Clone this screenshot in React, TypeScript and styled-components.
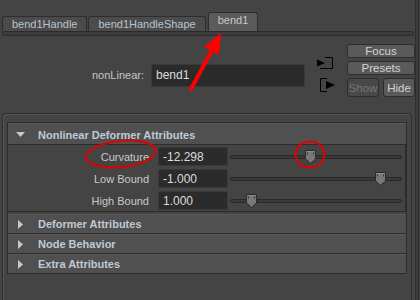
import React from 'react';
import styled, { createGlobalStyle } from 'styled-components';

const Global = createGlobalStyle`
  html, body { margin: 0; padding: 0; background: #444444; }
  body { font-family: "Liberation Sans", Arial, sans-serif; font-size: 11px; color: #c8c8c8; }
`;

const Root = styled.div`
  position: relative;
  width: 420px;
  height: 300px;
  overflow: hidden;
  background: #444444;
  display: flex;
`;

const Main = styled.div`
  width: 415px;
  display: flex;
  flex-direction: column;
`;

const Gutter = styled.div`
  flex: 1;
  border-left: 1px solid #2e2e2e;
  border-right: 1px solid #2e2e2e;
  background: #3d3d3d;
  margin-right: 1px;
`;

const TabBar = styled.div`
  height: 31px;
  display: flex;
  align-items: flex-end;
  padding-left: 2px;
  gap: 1px;
`;

const Tab = styled.div<{ $active?: boolean }>`
  height: ${(p) => (p.$active ? 19 : 15)}px;
  padding: 0 9px;
  margin-left: ${(p) => (p.$active ? 1 : 0)}px;
  display: flex;
  align-items: center;
  box-sizing: border-box;
  background: ${(p) => (p.$active ? '#5b5b5b' : '#4b4b4b')};
  border: 1px solid #2d2d2d;
  border-bottom: none;
  border-radius: 3px 3px 0 0;
  color: ${(p) => (p.$active ? '#c4c8cc' : '#b9c3cd')};
  font-size: 11px;
  line-height: 1;
  padding-bottom: ${(p) => (p.$active ? 3 : 0)}px;
`;

const TabBase = styled.div`
  height: 5px;
  box-sizing: border-box;
  margin: 0 1px 0 2px;
  background: #3c3c3c;
  border: 1px solid #2b2b2b;
  border-radius: 3px;
`;

const Top = styled.div`
  height: 77px;
  display: flex;
  align-items: center;
  justify-content: flex-end;
`;

const NameRow = styled.div`
  display: flex;
  align-items: center;
  margin-top: 1px;
`;

const NameLabel = styled.span`
  color: #c6c6c6;
  margin-right: 7px;
`;

const NameField = styled.div`
  width: 154px;
  height: 23px;
  box-sizing: border-box;
  background: #2b2b2b;
  border: 1px solid #393939;
  border-radius: 2px;
  padding-left: 4px;
  display: flex;
  align-items: center;
  color: #dcdcdc;
  font-size: 12px;
`;

const IconCol = styled.div`
  width: 18px;
  margin: 0 12px;
  display: flex;
  flex-direction: column;
  gap: 8px;
  margin-top: -1px;
`;

const ButtonCol = styled.div`
  align-self: flex-start;
  margin-top: 8px;
  width: 68px;
  display: flex;
  flex-direction: column;
  gap: 3px;
`;

const ButtonRow = styled.div`
  display: flex;
  gap: 4px;
`;

const Btn = styled.div<{ $disabled?: boolean; $w?: number }>`
  height: 19px;
  ${(p) => (p.$w ? `width: ${p.$w}px;` : 'flex: 1;')}
  box-sizing: border-box;
  border: 1px solid #2d2d2d;
  border-radius: 3px;
  background: ${(p) => (p.$disabled ? '#484848' : '#5a5a5a')};
  color: ${(p) => (p.$disabled ? '#777777' : '#d2d2d2')};
  display: flex;
  align-items: center;
  justify-content: center;
  font-size: 11.5px;
`;

const Frame = styled.div`
  flex: 1;
  margin: 0 3px 0 2px;
  border: 1px solid #2f2f2f;
  border-bottom: none;
  border-radius: 4px 4px 0 0;
  box-shadow: inset 1px 1px 0 #555555;
  padding: 8px 4px 0 4px;
  display: flex;
  flex-direction: column;
`;

const Section = styled.div`
  border: 1px solid #2c2c2c;
  border-bottom: none;
  display: flex;
  flex-direction: column;
`;

const Header = styled.div<{ $expanded?: boolean }>`
  height: ${(p) => (p.$expanded ? 22 : 20)}px;
  padding-top: ${(p) => (p.$expanded ? 2 : 0)}px;
  box-sizing: border-box;
  background: #505050;
  border-top: 1px solid #5a5a5a;
  border-bottom: 1px solid #2c2c2c;
  display: flex;
  align-items: center;
  padding-left: 8px;
  font-weight: bold;
  color: #bfcad6;
  font-size: 11px;
`;

const Arrow = styled.span`
  width: 22px;
  display: flex;
  align-items: center;
  justify-content: flex-start;
`;

const Content = styled.div`
  background: #444444;
  border-bottom: 1px solid #2c2c2c;
  border-right: 1px solid #2c2c2c;
  padding: 2px 0 1px 0;
  display: flex;
  flex-direction: column;
  gap: 3px;
  margin-bottom: 2px;
`;

const AttrRow = styled.div`
  height: 19px;
  display: flex;
  align-items: center;
`;

const AttrLabel = styled.span`
  width: 141px;
  text-align: right;
  color: #c8c8c8;
  margin-right: 9px;
`;

const AttrField = styled.div`
  width: 70px;
  height: 19px;
  box-sizing: border-box;
  background: #2b2b2b;
  border: 1px solid #393939;
  border-radius: 2px;
  padding-left: 4px;
  display: flex;
  align-items: center;
  color: #dcdcdc;
  font-size: 12px;
`;

const SliderWrap = styled.div`
  position: relative;
  width: 172px;
  margin-left: 2px;
  height: 19px;
  display: flex;
  align-items: center;
`;

const Track = styled.div`
  width: 100%;
  height: 4px;
  box-sizing: border-box;
  background: #3a3a3a;
  border: 1px solid #292929;
  border-radius: 2px;
`;

const Thumb = styled.svg`
  position: absolute;
  top: 2px;
  margin-left: -6px;
`;

const Overlay = styled.svg`
  position: absolute;
  left: 0;
  top: 0;
  pointer-events: none;
`;

const DownTri = () => (
  <svg width="9" height="6" viewBox="0 0 9 6">
    <polygon points="0,0 9,0 4.5,5" fill="#c8c8c8" />
  </svg>
);

const RightTri = () => (
  <svg width="6" height="9" viewBox="0 0 6 9" style={{ marginLeft: 2 }}>
    <polygon points="0,0 5,4.5 0,9" fill="#c8c8c8" />
  </svg>
);

const ConnIn = () => (
  <svg width="18" height="13" viewBox="0 0 18 13">
    <polygon points="0,2.5 8,6 0,9.5" fill="#000" />
    <polyline points="8,0.5 15.5,0.5 15.5,11.5 3,11.5" fill="none" stroke="#000" strokeWidth="1" />
  </svg>
);

const ConnOut = () => (
  <svg width="18" height="14" viewBox="0 0 18 14">
    <polyline points="10,0.5 3.5,0.5 3.5,13.5 10,13.5" fill="none" stroke="#000" strokeWidth="1" />
    <polygon points="9,3 18,7 9,11" fill="#000" />
  </svg>
);

const ThumbIcon = ({ pos }: { pos: number }) => (
  <Thumb width="13" height="16" viewBox="0 0 13 16" style={{ left: `${pos * 100}%` }}>
    <path d="M1.5 1.5 H11.5 V10 L6.5 14.5 L1.5 10 Z" fill="#787878" stroke="#2a2a2a" strokeWidth="1" />
    <path d="M2.5 2.5 H10.5" stroke="#8e8e8e" strokeWidth="1" />
    <rect x="3" y="3.5" width="1" height="2" fill="#333" />
    <rect x="9" y="3.5" width="1" height="2" fill="#333" />
  </Thumb>
);

const attrs = [
  { label: 'Curvature', value: '-12.298', pos: 0.465 },
  { label: 'Low Bound', value: '-1.000', pos: 0.87 },
  { label: 'High Bound', value: '1.000', pos: 0.12 },
];

const collapsed = ['Deformer Attributes', 'Node Behavior', 'Extra Attributes'];

export default function App() {
  return (
    <>
      <Global />
      <Root>
        <Main>
          <TabBar>
            <Tab>bend1Handle</Tab>
            <Tab>bend1HandleShape</Tab>
            <Tab $active>bend1</Tab>
          </TabBar>
          <TabBase />
          <Top>
            <NameRow>
              <NameLabel>nonLinear:</NameLabel>
              <NameField>bend1</NameField>
              <IconCol>
                <ConnIn />
                <ConnOut />
              </IconCol>
            </NameRow>
            <ButtonCol>
              <Btn>Focus</Btn>
              <Btn>Presets</Btn>
              <ButtonRow>
                <Btn $disabled $w={32}>Show</Btn>
                <Btn $w={32}>Hide</Btn>
              </ButtonRow>
            </ButtonCol>
          </Top>
          <Frame>
            <Section>
              <Header $expanded>
                <Arrow><DownTri /></Arrow>
                Nonlinear Deformer Attributes
              </Header>
              <Content>
                {attrs.map((a) => (
                  <AttrRow key={a.label}>
                    <AttrLabel>{a.label}</AttrLabel>
                    <AttrField>{a.value}</AttrField>
                    <SliderWrap>
                      <Track />
                      <ThumbIcon pos={a.pos} />
                    </SliderWrap>
                  </AttrRow>
                ))}
              </Content>
              {collapsed.map((c) => (
                <Header key={c}>
                  <Arrow><RightTri /></Arrow>
                  {c}
                </Header>
              ))}
            </Section>
          </Frame>
        </Main>
        <Gutter />
        <Overlay width="420" height="300" viewBox="0 0 420 300">
          <line x1="191" y1="89" x2="212" y2="50" stroke="#ff0000" strokeWidth="4" strokeLinecap="round" />
          <polygon points="221,33 204,47 219,55" fill="#ff0000" />
          <ellipse cx="121" cy="154" rx="35" ry="13" transform="rotate(-6 121 154)" fill="none" stroke="#e00000" strokeWidth="2" />
          <ellipse cx="310" cy="154.5" rx="14.5" ry="13" fill="none" stroke="#e00000" strokeWidth="2" />
        </Overlay>
      </Root>
    </>
  );
}
